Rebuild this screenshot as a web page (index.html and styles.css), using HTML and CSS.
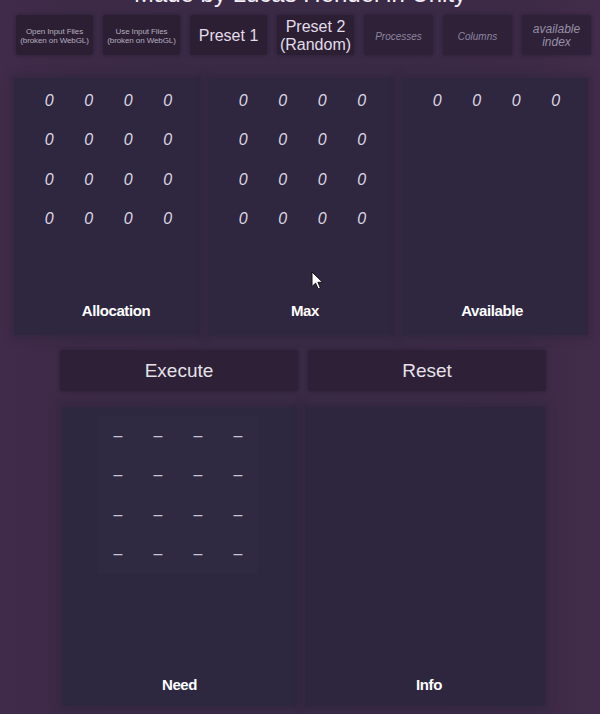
FILE: index.html
```html
<!DOCTYPE html>
<html>
<head>
<meta charset="utf-8">
<title>Banker's Algorithm</title>
<link rel="stylesheet" href="styles.css">
</head>
<body>
<div class="page">
  <div class="title">Made by Lucas Hendel in Unity</div>

  <div class="toolbar">
    <div class="tbtn tiny">Open Input Files<br>(broken on WebGL)</div>
    <div class="tbtn tiny">Use Input Files<br>(broken on WebGL)</div>
    <div class="tbtn">Preset 1</div>
    <div class="tbtn two">Preset 2<br>(Random)</div>
    <div class="field"><span class="ph">Processes</span></div>
    <div class="field"><span class="ph">Columns</span></div>
    <div class="field"><span class="ph big">available<br>index</span></div>
  </div>

  <div class="panels">
    <section class="panel">
      <div class="grid">
        <span>0</span><span>0</span><span>0</span><span>0</span>
        <span>0</span><span>0</span><span>0</span><span>0</span>
        <span>0</span><span>0</span><span>0</span><span>0</span>
        <span>0</span><span>0</span><span>0</span><span>0</span>
      </div>
      <div class="label shift-r">Allocation</div>
    </section>
    <section class="panel">
      <div class="grid">
        <span>0</span><span>0</span><span>0</span><span>0</span>
        <span>0</span><span>0</span><span>0</span><span>0</span>
        <span>0</span><span>0</span><span>0</span><span>0</span>
        <span>0</span><span>0</span><span>0</span><span>0</span>
      </div>
      <div class="label shift-s">Max</div>
    </section>
    <section class="panel">
      <div class="grid">
        <span>0</span><span>0</span><span>0</span><span>0</span>
      </div>
      <div class="label shift-l">Available</div>
    </section>
  </div>

  <div class="actions">
    <div class="abtn">Execute</div>
    <div class="abtn">Reset</div>
  </div>

  <div class="lower">
    <section class="panel need">
      <div class="grid dashes">
        <span>–</span><span>–</span><span>–</span><span>–</span>
        <span>–</span><span>–</span><span>–</span><span>–</span>
        <span>–</span><span>–</span><span>–</span><span>–</span>
        <span>–</span><span>–</span><span>–</span><span>–</span>
      </div>
      <div class="label">Need</div>
    </section>
    <section class="panel info">
      <div class="label shift-s">Info</div>
    </section>
  </div>

  <svg class="cursor" width="13" height="19" viewBox="0 0 13 19">
    <path d="M1 1 L1 15.5 L4.6 12.2 L7.2 18 L9.4 17 L6.9 11.3 L11.6 11.3 Z" fill="#ffffff" stroke="#111111" stroke-width="1" stroke-linejoin="round"/>
  </svg>
</div>
</body>
</html>
```

FILE: styles.css
```css
html, body {
  margin: 0;
  padding: 0;
}

body {
  width: 600px;
  height: 714px;
  overflow: hidden;
  background: #3c2a47;
  font-family: "Liberation Sans", Arial, sans-serif;
}

.page {
  position: relative;
  width: 600px;
  height: 714px;
  overflow: hidden;
  background:
    linear-gradient(to right, #412b4a 0%, #3c2a47 12%, #3a2a46 50%, #3c2a47 88%, #432c4b 100%);
}

.title {
  height: 24px;
  margin-top: -18px;
  line-height: 24px;
  font-size: 24px;
  text-align: center;
  color: #f4f0f6;
}

/* top toolbar */
.toolbar {
  display: flex;
  gap: 10px;
  margin-top: 9px;
  padding-left: 16px;
  height: 40px;
}

.tbtn {
  width: 77px;
  height: 40px;
  box-sizing: border-box;
  padding-top: 2px;
  display: flex;
  align-items: center;
  justify-content: center;
  text-align: center;
  background: #2c1f34;
  border-radius: 3px;
  color: #e2dde8;
  font-size: 16px;
  line-height: 18px;
  box-shadow: 0 0 3px 1px rgba(40, 28, 50, 0.5);
}

.tbtn.tiny {
  font-size: 8px;
  line-height: 9px;
  color: #b4adbd;
  letter-spacing: -0.1px;
  padding-top: 1px;
}

.tbtn.two {
  padding-top: 2px;
}

.field {
  width: 69px;
  height: 40px;
  box-sizing: border-box;
  padding-top: 2px;
  display: flex;
  align-items: center;
  justify-content: center;
  text-align: center;
  background: #2e2138;
  border-radius: 3px;
  box-shadow: 0 0 3px 1px rgba(40, 28, 50, 0.5);
}

.ph {
  font-style: italic;
  font-size: 10px;
  color: #8d85a0;
}

.ph.big {
  font-size: 12px;
  line-height: 13px;
  color: #9890a8;
}

/* matrix panels */
.panels {
  display: flex;
  gap: 8px;
  margin-top: 23px;
  padding-left: 14px;
  height: 257px;
}

.panel {
  display: flex;
  flex-direction: column;
  background: #2f263f;
  box-shadow: 0 0 7px 3px rgba(46, 36, 62, 0.55);
}

.panels .panel {
  width: 186px;
}

.grid {
  display: grid;
  grid-template-columns: repeat(4, 39.5px);
  grid-auto-rows: 39.5px;
  justify-content: center;
  align-items: center;
  justify-items: center;
  margin-top: 3px;
  padding-left: 3px;
  color: #dcd7e4;
  font-size: 16px;
  font-style: italic;
}

.label {
  margin-top: auto;
  padding-bottom: 15px;
  text-align: center;
  color: #ffffff;
  font-weight: bold;
  font-size: 15px;
  line-height: 18px;
  letter-spacing: -0.4px;
}

.label.shift-r {
  padding-left: 18px;
}

.label.shift-s {
  padding-left: 8px;
}

.label.shift-l {
  padding-right: 6px;
}

/* action buttons */
.actions {
  display: flex;
  gap: 10px;
  margin-top: 15px;
  padding-left: 60px;
  height: 41px;
}

.abtn {
  width: 238px;
  height: 41px;
  display: flex;
  align-items: center;
  justify-content: center;
  background: #2e2036;
  border-radius: 3px;
  color: #e6e2ea;
  font-size: 19px;
  box-shadow: 0 0 3px 1px rgba(40, 28, 50, 0.5);
}

/* lower panels */
.lower {
  display: flex;
  gap: 8px;
  margin-top: 16px;
  padding-left: 62px;
  height: 299px;
}

.need {
  width: 235px;
  background: #2d2740;
}

.info {
  width: 240px;
  background: #2e263e;
}

.grid.dashes {
  justify-content: start;
  grid-template-columns: repeat(4, 40px);
  margin-left: 36px;
  margin-top: 9px;
  padding-left: 0;
  width: 160px;
  font-style: normal;
  color: #c9c3d2;
  background: rgba(255, 255, 255, 0.012);
}

.lower .label {
  padding-bottom: 12px;
}

.cursor {
  position: absolute;
  left: 311px;
  top: 271px;
}
```
